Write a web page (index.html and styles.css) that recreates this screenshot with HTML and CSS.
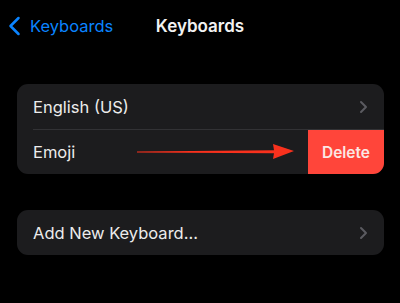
FILE: index.html
```html
<!DOCTYPE html>
<html>
<head>
<meta charset="utf-8">
<link rel="stylesheet" href="styles.css">
</head>
<body>
<div class="nav">
  <div class="back">
    <svg class="back-chev" width="13" height="20" viewBox="0 0 13 20"><path d="M10.5 2 L2.5 10 L10.5 18" fill="none" stroke="#0a84ff" stroke-width="2.5" stroke-linecap="round" stroke-linejoin="round"/></svg>
    <span>Keyboards</span>
  </div>
  <div class="title">Keyboards</div>
  <div></div>
</div>
<div class="card">
  <div class="row">
    <span class="label">English (US)</span>
    <svg class="chev" width="9" height="14" viewBox="0 0 9 14"><path d="M2 2 L7 7 L2 12" fill="none" stroke="#5b5b60" stroke-width="2" stroke-linecap="round" stroke-linejoin="round"/></svg>
  </div>
  <div class="row swiped">
    <span class="label">Emoji</span>
    <svg class="arrow" width="160" height="18" viewBox="0 0 160 18"><path d="M0 8.6 L137 7.3 L136 1 L157 8 L136 16 L137 10.3 L0 9.6 Z" fill="#f8311d"/></svg>
    <div class="delete">Delete</div>
  </div>
</div>
<div class="card second">
  <div class="row">
    <span class="label">Add New Keyboard...</span>
    <svg class="chev" width="9" height="14" viewBox="0 0 9 14"><path d="M2 2 L7 7 L2 12" fill="none" stroke="#5b5b60" stroke-width="2" stroke-linecap="round" stroke-linejoin="round"/></svg>
  </div>
</div>
</body>
</html>
```
FILE: styles.css
```css
html, body {
  margin: 0;
  padding: 0;
  background: #000;
}
body {
  font-family: Inter, "Noto Sans", sans-serif;
  color: #ececec;
  width: 400px;
  height: 303px;
  overflow: hidden;
}
.nav {
  display: grid;
  grid-template-columns: 1fr auto 1fr;
  align-items: center;
  height: 50px;
  padding-top: 1px;
}
.back {
  display: flex;
  align-items: center;
  color: #0a84ff;
  font-size: 16.5px;
  padding-left: 8px;
  gap: 9px;
}
.title {
  font-size: 17px;
  font-weight: 600;
  color: #f2f2f2;
}
.card {
  margin: 33px 16px 0 17px;
  background: #1c1c1e;
  border-radius: 11px;
  overflow: hidden;
}
.card.second {
  margin-top: 36px;
}
.row {
  position: relative;
  display: flex;
  align-items: center;
  justify-content: space-between;
  height: 45px;
  padding: 0 16px;
  font-size: 16.5px;
}
.row.swiped {
  padding-right: 0;
  margin-left: 16px;
  padding-left: 0;
  border-top: 1px solid #323235;
  height: 44px;
}
.delete {
  background: #ff453a;
  color: #fbe7e4;
  font-weight: 600;
  font-size: 15.5px;
  width: 76px;
  height: 100%;
  display: flex;
  align-items: center;
  justify-content: center;
}
.arrow {
  position: absolute;
  left: 104px;
  top: 13px;
}
```
